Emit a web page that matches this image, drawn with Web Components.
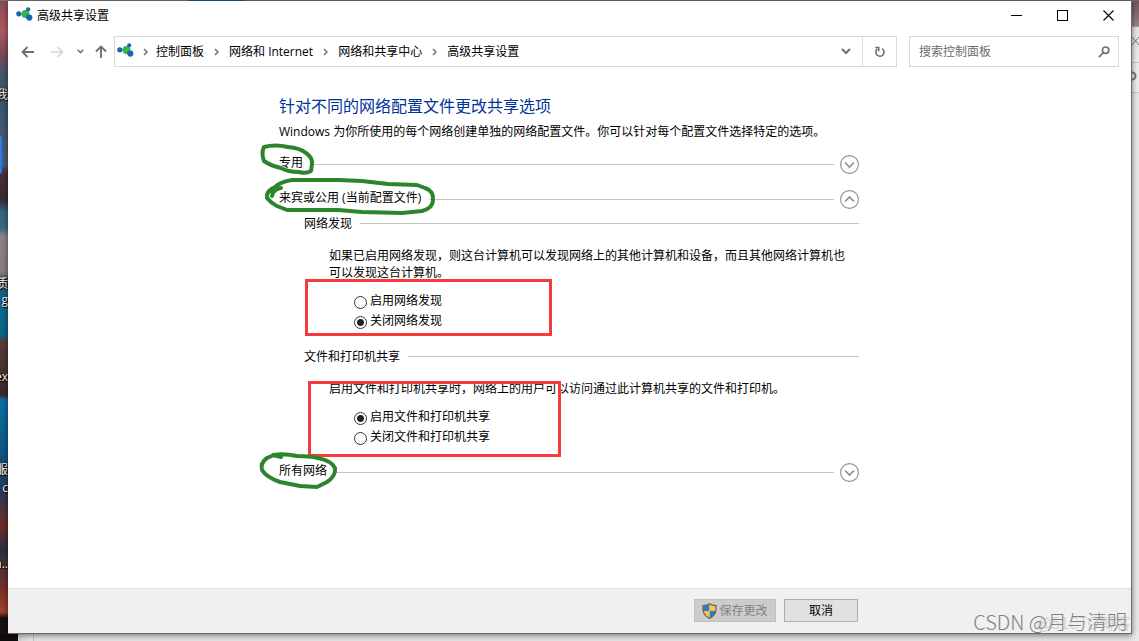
<!DOCTYPE html>
<html lang="zh-CN">
<head>
<meta charset="utf-8">
<title>高级共享设置</title>
<style>
html, body { margin: 0; height: 100%; }
body { font: 12px/18px "Open Sans", "Noto Sans CJK SC", sans-serif; color: #000; overflow: hidden; }
</style>
</head>
<body>
<desktop-scene>
  <app-window>
    <title-bar slot="title">高级共享设置</title-bar>
    <nav-bar slot="nav"></nav-bar>
    <sharing-page>
      <profile-group label="专用"></profile-group>
      <profile-group label="来宾或公用 (当前配置文件)" open>
        <option-section label="网络发现">
          <span slot="text">如果已启用网络发现，则这台计算机可以发现网络上的其他计算机和设备，而且其他网络计算机也可以发现这台计算机。</span>
          <radio-list name="discovery" options="启用网络发现|关闭网络发现" selected="1"></radio-list>
        </option-section>
        <option-section label="文件和打印机共享" class="next">
          <span slot="text">启用文件和打印机共享时，网络上的用户可以访问通过此计算机共享的文件和打印机。</span>
          <radio-list name="sharing" options="启用文件和打印机共享|关闭文件和打印机共享" selected="0"></radio-list>
        </option-section>
      </profile-group>
      <profile-group label="所有网络"></profile-group>
      <ink-marks></ink-marks>
    </sharing-page>
    <action-bar slot="footer"></action-bar>
  </app-window>
  <water-mark slot="mark"></water-mark>
</desktop-scene>

<script>
const define = (name, html, setup) => {
  const template = document.createElement('template');
  template.innerHTML = html;
  customElements.define(name, class extends HTMLElement {
    constructor() {
      super();
      this.attachShadow({ mode: 'open' }).append(template.content.cloneNode(true));
    }
    connectedCallback() { if (setup) setup(this, this.shadowRoot); }
  });
};

define('desktop-scene', `
<style>
:host { display: grid; position: relative; box-sizing: border-box; min-height: 100vh; padding: 1px 7px 7px 8px; overflow: hidden; background: #ececec; }
.wall { position: absolute; left: 0; top: 0; bottom: 0; width: 8px; overflow: hidden; color: #fff; text-shadow: 0 0 2px #000, 1px 1px 1px #000;
  background: linear-gradient(#8a4a56 0, #b05a60 30px, #7d4a5c 55px, #46566f 75px, #3c536c 100px, #45607a 165px, #4b3038 172px, #3b2b3a 200px, #2f6680 212px, #3c6880 228px, #8b8388 236px, #857e84 272px, #2b5264 282px, #0d6a91 300px, #0b6587 335px, #5a3a36 342px, #3a2a2c 395px, #0c6fa3 400px, #0d5784 450px, #243b5a 490px, #6e2e28 525px, #2b3044 550px, #7b3026 590px, #a3402c 612px, #17100e 618px); }
.wall i { position: absolute; right: 0; font-style: normal; white-space: nowrap; }
.blue { position: absolute; left: 0; top: 136px; width: 2px; height: 38px; background: #3478f0; border-radius: 0 2px 2px 0; }
.top { position: absolute; left: 0; right: 0; top: 0; height: 1px; background: linear-gradient(90deg, #777 188px, #23577a 188px, #23577a 244px, #6d6d6d 244px); }
.side { position: absolute; right: 0; top: 0; bottom: 0; width: 7px; overflow: hidden;
  background: linear-gradient(#6d5257 0, #9c8585 26px, #555 26px, #e6e6e6 27px, #ededed 62px, #ccc 62px, #ccc 63px, #ededed 63px, #ededed 92px, #ccc 92px, #ccc 93px, #e9e9e9 93px); }
.side svg { display: block; }
.low { position: absolute; left: 0; right: 0; bottom: 0; height: 7px; background: linear-gradient(90deg, #0e0c0c 18px, #d2d2d2 18px, #e8e8e8 33px, #999 33px, #e4e4e4 34px); }
</style>
<div class="wall"><span class="blue"></span>
<i style="top:86px">我</i><i style="top:275px">质</i><i style="top:291px">g</i><i style="top:368px">ex</i><i style="top:461px">服</i><i style="top:479px">c</i><i style="top:555px">n..</i></div>
<div class="low"></div>
<div class="side"><svg width="7" height="100" fill="none" stroke="#777"><path d="M-1 36L8 46M-1 46L8 36"/><circle cx="0" cy="76" r="3.5" stroke-width="2"/></svg></div>
<div class="top"></div>
<slot></slot><slot name="mark"></slot>`);

define('app-window', `
<style>
:host { display: flex; flex-direction: column; position: relative; background: #fff; border: solid #6a6a6a; border-width: 0 1px 1px 0; box-shadow: 0 1px 6px #0008; }
main { flex: 1; }
</style>
<slot name="title"></slot><slot name="nav"></slot><main><slot></slot></main><slot name="footer"></slot>`);

define('share-icon', `
<style>:host { display: block; } svg { display: block; }</style>
<svg width="17" height="15" viewBox="0 0 17 15"><path d="M3 7L9 7L12 2M9 7L13 11" stroke="#8cc9b5" stroke-width="1.5" fill="none"/><circle cx="9.5" cy="7" r="4" fill="#35b44a"/><circle cx="2.8" cy="6.8" r="2.6" fill="#1665ad"/><circle cx="12.2" cy="2.3" r="2.1" fill="#1665ad"/><circle cx="13.3" cy="10.6" r="3.1" fill="#1665ad"/></svg>`);

define('title-bar', `
<style>
:host { display: flex; align-items: center; height: 30px; }
share-icon { margin: 0 4px 4px 8px; }
.name { flex: 1; }
button { width: 46px; height: 30px; padding: 0 0 2px; border: 0; background: none; display: grid; place-items: center; }
svg { display: block; }
</style>
<share-icon></share-icon><span class="name"><slot></slot></span>
<button aria-label="最小化"><svg width="11" height="11"><path d="M0 5.5H11" stroke="#000"/></svg></button>
<button aria-label="最大化"><svg width="11" height="11"><rect x=".5" y=".5" width="10" height="10" fill="none" stroke="#000"/></svg></button>
<button aria-label="关闭"><svg width="11" height="11"><path d="M.5.5L10.5 10.5M10.5.5L.5 10.5" stroke="#000" stroke-width="1.1"/></svg></button>`);

define('nav-bar', `
<style>
:host { display: flex; padding: 5px 12px 0 4px; height: 31px; }
button { padding: 0; border: 0; background: none; display: grid; place-items: center; width: 30px; color: #707070; }
svg { fill: none; stroke: currentColor; stroke-width: 2; display: block; }
.forward { color: #d4d4d4; }
.small { width: 16px; } .up { width: 26px; }
.address, .search { display: flex; box-sizing: border-box; border: 1px solid #d9d9d9; }
.address { flex: 1; min-width: 0; }
nav { flex: 1; display: flex; align-items: center; padding-left: 2px; white-space: nowrap; }
nav share-icon { margin-bottom: 3px; }
nav a { color: #000; text-decoration: none; }
.sep { width: 25px; display: grid; place-items: center; color: #707070; }
.sep.first { width: 22px; }
.drop { width: 32px; }
.reload { width: 34px; border-left: 1px solid #d9d9d9; }
.search { width: 210px; margin-left: 12px; align-items: center; }
input { flex: 1; min-width: 0; border: 0; outline: 0; padding: 0 0 0 9px; font: inherit; background: none; height: 27px; }
input::placeholder { color: #6d6d6d; opacity: 1; }
.search button { width: 28px; height: 29px; }
</style>
<button aria-label="后退"><svg width="13" height="12"><path d="M6.5 1L1.5 6L6.5 11M1.5 6H13" stroke-width="1.8"/></svg></button>
<button class="forward" aria-label="前进"><svg width="13" height="12"><path d="M6.5 1L11.5 6L6.5 11M11.5 6H0" stroke-width="1.6"/></svg></button>
<button class="small" aria-label="最近的位置"><svg width="7" height="5"><path d="M.7.8L3.5 3.6L6.3.8" stroke-width="1.5"/></svg></button>
<button class="up" aria-label="上移"><svg width="12" height="13"><path d="M1 6.5L6 1.5L11 6.5M6 1.5V13" stroke-width="1.9"/></svg></button>
<div class="address">
  <nav></nav>
  <button class="drop" aria-label="历史记录"><svg width="10" height="7"><path d="M1 1L5 5L9 1"/></svg></button>
  <button class="reload" aria-label="刷新"><svg width="12" height="12"><path d="M8 2.6A4.1 4.1 0 1 1 3.4 2.9" stroke-width="1.6"/><path d="M1.2 1.6H4.8V5.2" stroke-width="1.5"/></svg></button>
</div>
<div class="search"><input type="text" aria-label="搜索控制面板" placeholder="搜索控制面板"><button aria-label="搜索"><svg width="12" height="12"><circle cx="7.6" cy="4.2" r="3.2" stroke-width="1.7"/><path d="M5.4 6.6L.9 11.1" stroke-width="1.7"/></svg></button></div>`,
(el, root) => {
  const sep = c => `<span class="sep ${c}"><svg width="5" height="8"><path d="M1 1L4 4L1 7" stroke-width="1.5"/></svg></span>`;
  root.querySelector('nav').innerHTML = '<share-icon></share-icon>' +
    ['控制面板', '网络和 Internet', '网络和共享中心', '高级共享设置']
      .map((t, i) => sep(i ? '' : 'first') + `<a href="#">${t}</a>`).join('');
});

define('sharing-page', `
<style>
:host { display: block; padding: 27px 1px 24px 0; }
.column { position: relative; width: 580px; max-width: 100%; margin: 0 auto; }
h1 { margin: 0; font-size: 16px; line-height: 24px; font-weight: 400; color: #003399; }
p { margin: 5px 0 0; }
slot { display: grid; gap: 15px; margin-top: 13px; }
</style>
<div class="column"><h1>针对不同的网络配置文件更改共享选项</h1><p>Windows 为你所使用的每个网络创建单独的网络配置文件。你可以针对每个配置文件选择特定的选项。</p><slot></slot></div>`);

define('profile-group', `
<style>
:host { display: block; }
header { display: flex; align-items: center; height: 20px; }
h2 { margin: 0 8px 2px 0; font-size: 12px; line-height: 18px; font-weight: 400; }
.rule { flex: 1; height: 1px; background: #c6c6c6; }
button { margin-left: 6px; width: 19px; height: 19px; padding: 0; border: 0; background: none; }
svg { display: block; fill: none; stroke: #8e8e8e; }
</style>
<header><h2></h2><span class="rule"></span><button><svg width="19" height="19"><circle cx="9.5" cy="9.5" r="8.9" stroke-width="1.1"/><path stroke-width="1.6"/></svg></button></header>
<slot></slot>`,
(el, root) => {
  const open = el.hasAttribute('open');
  root.querySelector('h2').textContent = el.getAttribute('label');
  root.querySelector('button').setAttribute('aria-label', open ? '折叠' : '展开');
  root.querySelector('path').setAttribute('d', open ? 'M5 11.5L9.5 7L14 11.5' : 'M5 7.5L9.5 12L14 7.5');
});

define('option-section', `
<style>
:host { display: block; padding: 5px 0 0 25px; }
:host(.next) { padding-top: 16px; }
header { display: flex; align-items: center; gap: 8px; height: 18px; }
h3 { margin: 2px 0 0; font-size: 12px; line-height: 18px; font-weight: 400; }
.rule { flex: 1; height: 1px; background: #c6c6c6; }
p { margin: 15px 12px 10px 25px; line-height: 17px; }
</style>
<header><h3></h3><span class="rule"></span></header><p><slot name="text"></slot></p><slot></slot>`,
(el, root) => { root.querySelector('h3').textContent = el.getAttribute('label'); });

define('radio-list', `
<style>
:host { display: block; padding-left: 50px; }
label { display: flex; align-items: center; gap: 3px; height: 20px; }
input { appearance: none; box-sizing: border-box; width: 13px; height: 13px; margin: 2px 0 0; border: 1px solid #333; border-radius: 50%; background: #fff; }
input:checked { background: radial-gradient(circle, #222 3px, #fff 4px); }
</style>`,
(el, root) => {
  el.getAttribute('options').split('|').forEach((text, i) => {
    const label = document.createElement('label');
    label.innerHTML = `<input type="radio" name="${el.getAttribute('name')}"><span>${text}</span>`;
    label.firstChild.checked = i === Number(el.getAttribute('selected'));
    root.append(label);
  });
});

define('ink-marks', `
<style>
:host { position: absolute; left: -19px; top: 46px; pointer-events: none; }
svg { display: block; fill: none; overflow: visible; stroke-linecap: round; stroke-linejoin: round; }
</style>
<svg width="302" height="350" viewBox="260 140 302 350" aria-hidden="true">
<g stroke="#f93a3a" stroke-width="3" stroke-linejoin="miter"><rect x="306.5" y="280.5" width="244" height="54"/><rect x="309.5" y="382.5" width="250" height="73"/></g>
<g stroke="#2c842c" stroke-width="4">
<path d="M264 147Q275 144 288 147Q300 148 306 153Q313 158 312 164L311 171Q306 174 299 172Q288 172 281 168Q271 166 264 161Q261 153 264 147"/>
<path d="M272 196Q273 189 281 188M273 188Q266 192 267 198Q271 203 277 206L287 210L338 210L362 212L402 213L422 211Q433 208 433 200Q434 191 425 188L417 185L388 184L362 181L338 180L292 180Q280 182 275 187"/>
<path d="M281 457L273 455Q284 453 297 456Q309 456 318 458Q332 461 335 468Q336 476 327 482L317 487L300 486L280 482Q266 477 262 470Q260 463 267 458L274 455"/>
</g></svg>`);

define('action-bar', `
<style>
:host { display: block; height: 44px; border-top: 1px solid #dfdfdf; background: #f0f0f0; padding-right: 1px; }
.column { display: flex; justify-content: flex-end; gap: 8px; box-sizing: border-box; width: 580px; max-width: 100%; margin: 0 auto; padding: 10px 1px 0 0; }
button { box-sizing: border-box; height: 23px; padding: 0; font: inherit; color: #000; border: 1px solid #adadad; background: #e1e1e1; display: flex; align-items: center; justify-content: center; gap: 2px; width: 74px; }
button:disabled { width: 82px; color: #838383; background: #ccc; border-color: #bfbfbf; }
svg { display: block; }
</style>
<div class="column"><button disabled><svg width="15" height="16" viewBox="0 0 15 16"><defs><clipPath id="s"><path d="M7.5 .5Q10 2.5 14 2.5V7Q13.5 12.5 7.5 15.5Q1.5 12.5 1 7V2.5Q5 2.5 7.5 .5Z"/></clipPath></defs><g clip-path="url(#s)"><path fill="#2e7cc8" d="M0 0H7.5V8H0ZM7.5 8H15V16H7.5Z"/><path fill="#f7c64b" d="M7.5 0H15V8H7.5ZM0 8H7.5V16H0Z"/></g><path d="M7.5 .8Q10 2.7 14 2.7V7Q13.5 12.5 7.5 15.3Q1.5 12.5 1 7V2.7Q5 2.7 7.5 .8Z" fill="none" stroke="#686868" stroke-width="1.3"/></svg>保存更改</button><button>取消</button></div>`);

define('water-mark', `
<style>
:host { position: absolute; right: 12px; bottom: 7px; font: 300 20px/24px "Noto Sans CJK SC", sans-serif; color: #808080; white-space: nowrap; }
.under { position: absolute; right: -4px; bottom: 0; font-size: 16px; line-height: 24px; color: #aaa9; }
</style>
<span class="under">@51CTO博客</span><span>CSDN @月与清明</span>`);
</script>
</body>
</html>
